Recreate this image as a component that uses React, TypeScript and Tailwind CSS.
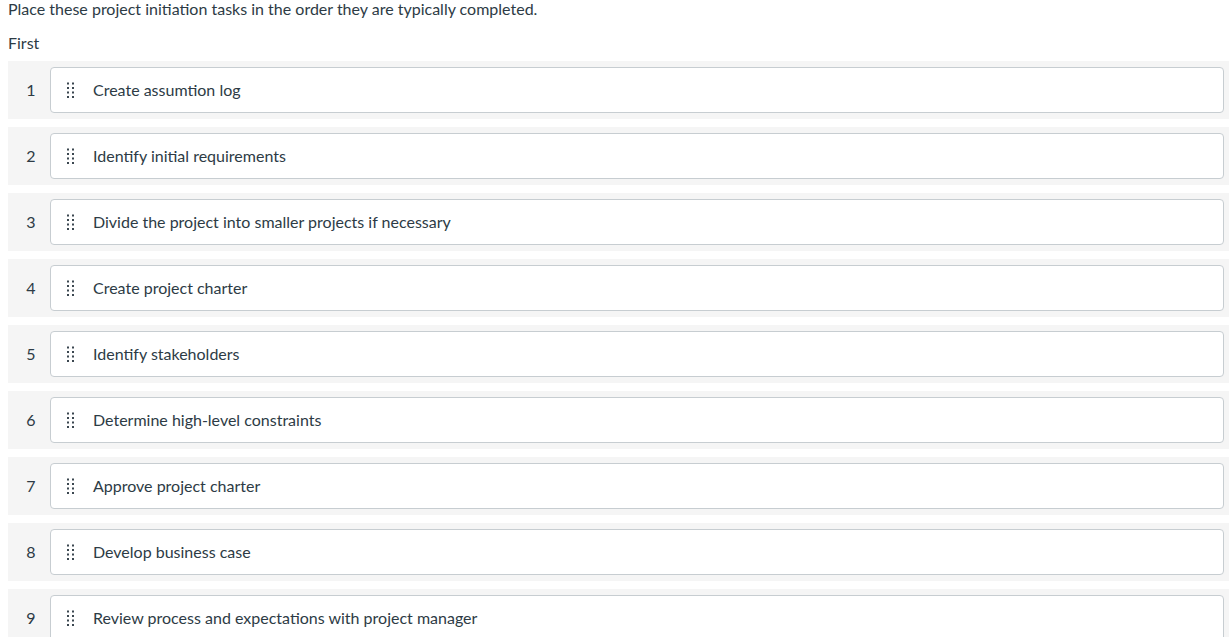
import React from "react";

const items = [
  "Create assumtion log",
  "Identify initial requirements",
  "Divide the project into smaller projects if necessary",
  "Create project charter",
  "Identify stakeholders",
  "Determine high-level constraints",
  "Approve project charter",
  "Develop business case",
  "Review process and expectations with project manager",
];

function Handle() {
  return (
    <svg width="9" height="16" viewBox="0 0 9 16" className="shrink-0">
      {[0, 1, 2, 3].map((r) =>
        [0, 1].map((c) => (
          <rect key={`${r}-${c}`} x={1 + c * 5} y={0.5 + r * 4.5} width="2" height="2" fill="#3b4750" />
        ))
      )}
    </svg>
  );
}

export default function App() {
  return (
    <div className="bg-white min-h-screen text-[#2d3b45]" style={{ fontFamily: "Lato, 'Open Sans', sans-serif" }}>
      <div className="pl-2 pr-[2px]">
        <p className="text-[16px] leading-[18px]">Place these project initiation tasks in the order they are typically completed.</p>
        <p className="text-[16px] leading-[18px] mt-[16px]">First</p>
        <div className="mt-[9px] flex flex-col gap-[8px]">
          {items.map((t, i) => (
            <div key={i} className="bg-[#f5f5f5] flex items-center h-[58px] pr-[5px]">
              <div className="w-[42px] text-center pl-[4px] text-[16px]">{i + 1}</div>
              <div className="flex-1 h-[46px] bg-white border border-[#c7cdd1] rounded-[4px] flex items-center pl-[15px]">
                <Handle />
                <span className="ml-[18px] text-[16px]">{t}</span>
              </div>
            </div>
          ))}
        </div>
      </div>
    </div>
  );
}
